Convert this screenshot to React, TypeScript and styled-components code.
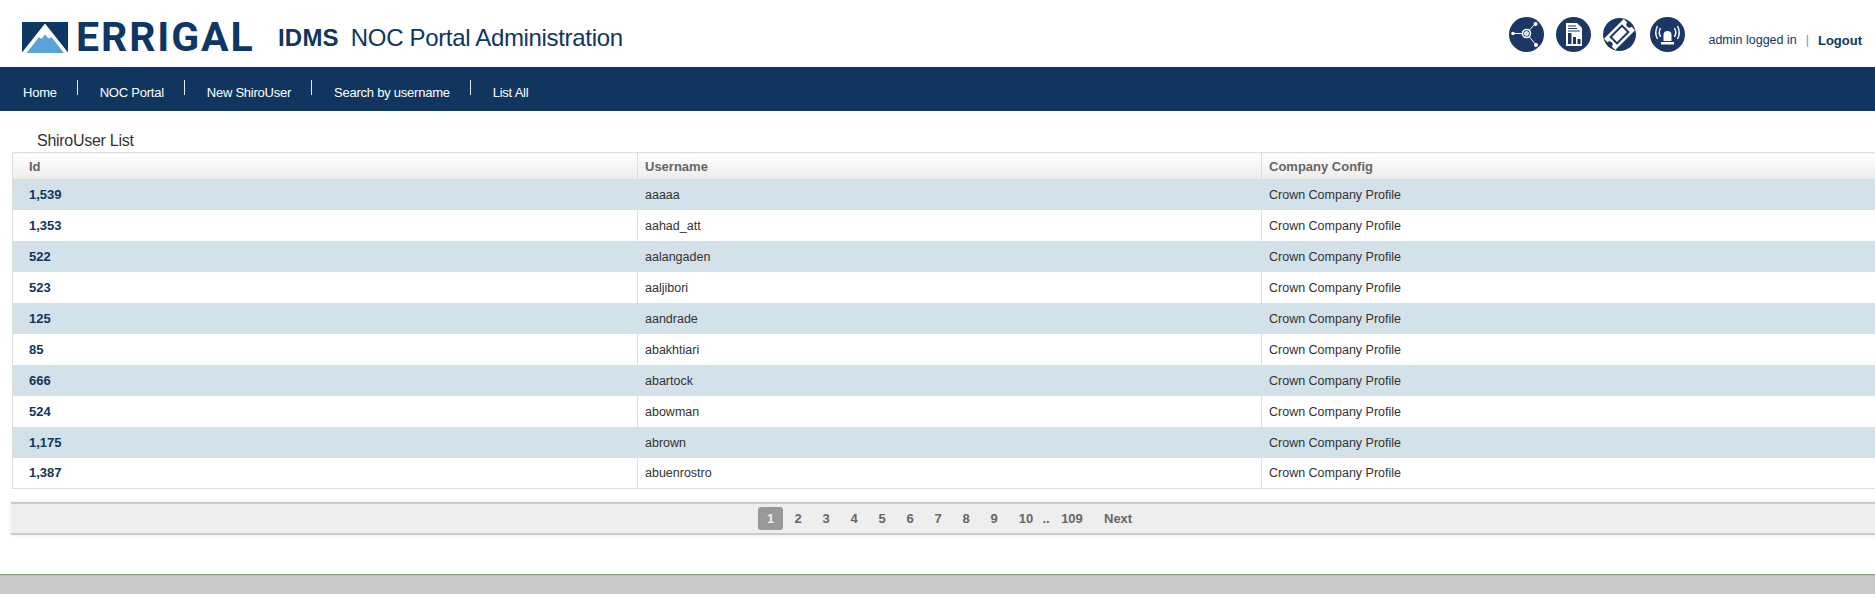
import React from "react";
import styled, { createGlobalStyle } from "styled-components";

const Global = createGlobalStyle`
  html, body { margin: 0; padding: 0; background: #fff; overflow: hidden; }
  body { font-family: "Liberation Sans", Arial, sans-serif; }
  #root { height: 594px; }
`;
const navy = "#10365f";
const Page = styled.div`
  width: 1875px; height: 594px; display: flex; flex-direction: column; overflow: hidden;
`;
const Header = styled.header`
  height: 67px; flex: none; display: flex; align-items: flex-start; padding-left: 22px; box-sizing: border-box;
`;
const Logo = styled.div`
  display: flex; gap: 8px; margin-top: 22px; width: 256px; flex: none; height: 31px;
`;
const LogoWord = styled.span`
  display: block; font: 700 41px/31px Roboto, "Liberation Sans", sans-serif; color: #0f3766;
  letter-spacing: 1.9px; white-space: nowrap;
`;
const Title = styled.h1`
  margin: 23px 0 0; font: 400 24px/30px "Liberation Sans", sans-serif; color: ${navy}; white-space: nowrap; letter-spacing: -.33px;
`;
const TitleStrong = styled.strong`
  font-weight: 700; margin-right: 12px; letter-spacing: .2px;
`;
const Right = styled.div`
  margin-left: auto; display: flex; align-items: flex-start; padding-right: 13px;
`;
const Icons = styled.div`
  display: flex; gap: 12px; margin-top: 17px; margin-right: 23px;
`;
const IconSvg = styled.svg`
  width: 35px; height: 35px; display: block;
`;
const Status = styled.div`
  margin-top: 33px; font-size: 12.5px; line-height: 15px; color: ${navy}; display: flex; white-space: nowrap;
`;
const Sep = styled.span`
  margin: 0 9px; color: #6f9cc4;
`;
const LogoutLink = styled.a`
  font-weight: 700; font-size: 13px; color: ${navy};
`;
const Nav = styled.nav`
  height: 44px; flex: none; background: #10365f; display: flex; align-items: flex-start; padding-left: 23px;
`;
const NavItem = styled.a<{ $divider?: boolean }>`
  position: relative; font-size: 13px; line-height: 15px; margin-top: 18px; color: #fff; white-space: nowrap;
  margin-right: ${(p) => (p.$divider ? "43px" : "0")};
  letter-spacing: -.24px;
  ${(p) => p.$divider && `&::after { content: ""; position: absolute; right: -21px; top: -5px; width: 1px; height: 15px; background: #e6ebf1; }`}
`;
const Heading = styled.div`
  font-size: 16px; line-height: 18px; color: #333; margin: 21px 0 0 37px; height: 20px; flex: none; letter-spacing: -.28px;
`;
const Table = styled.table`
  margin-left: 12px; width: 1875px; table-layout: fixed; border-collapse: collapse; border: 1px solid #dedede; flex: none;
`;
const Th = styled.th`
  height: 26px; padding: 1px 0 0 16px; box-sizing: border-box; text-align: left; font-size: 13px; font-weight: 700; color: #666;
  background: linear-gradient(#fff, #ececec); border-right: 1px solid #dedede;
  &:not(:first-child) { padding-left: 7px; }
`;
const Tr = styled.tr<{ $odd: boolean }>`
  background: ${(p) => (p.$odd ? "#d3e1e8" : "#fff")};
`;
const Td = styled.td`
  height: 31px; padding: 1px 0 0 7px; box-sizing: border-box; font-size: 12.5px; color: #333; border-right: 1px solid #dedede; white-space: nowrap;
`;
const IdCell = styled(Td)`
  padding: 0 0 0 16px; font-size: 13px; font-weight: 700; color: #10365f;
`;
const Pager = styled.div`
  margin: 13px 0 0 11px; height: 33px; width: 1875px; flex: none; box-sizing: border-box; background: #eee;
  border-top: 2px solid #ccc; border-bottom: 2px solid #ccc; box-shadow: 0 0 3px rgba(0,0,0,.12);
`;
const PagerRow = styled.div`
  display: flex; align-items: center; height: 29px; padding-left: 746px; font-size: 13px; font-weight: 700; color: #666;
`;
const PageNum = styled.a<{ $active?: boolean; $wide?: boolean }>`
  width: 28px; text-align: center; line-height: 23px; height: 23px; flex: none;
  ${(p) => p.$wide && `margin-left: 4px;`}
  ${(p) => p.$active && `width: 25px; margin-right: 1px; margin-left: 1px; background: #999; color: #eee; border-radius: 3px;`}
`;
const Gap = styled.span` width: 18px; text-align: center; flex:none; margin-left: -3px; `;
const Last = styled.a` width: 30px; text-align: center; flex:none; margin-left: 2px; `;
const NextLink = styled.a` margin-left: 17px; flex:none; `;
const Footer = styled.div`
  margin-top: auto; height: 19px; flex: none; background: #c9c9c9; border-top: 1px solid #8a9e80; box-shadow: inset 0 1px #b9c2b2;
`;

const bg = "#1b3766";
const NodesIcon = () => (
  <IconSvg viewBox="0 0 35 35">
    <circle cx="17.5" cy="17.5" r="17.5" fill={bg} />
    <g stroke="#fff" strokeWidth="1" fill="none">
      <path d="M4 16.5H13.5M20 13.5L26 7M20.5 20L27 28" />
      <circle cx="17.5" cy="16.5" r="4" strokeWidth="1.6" />
      <circle cx="17.5" cy="16.5" r="2" fill="#cdd6e2" />
    </g>
    <g fill="#fff"><circle cx="4" cy="16.5" r="1.8" /><circle cx="26.5" cy="7" r="2" /><circle cx="27" cy="28" r="2" /></g>
  </IconSvg>
);
const ReportIcon = () => (
  <IconSvg viewBox="0 0 35 35">
    <circle cx="17.5" cy="17.5" r="17.5" fill={bg} />
    <path d="M10 6H21L26 11V29H10Z" fill="#fff" />
    <path d="M12 9H20M12 11.5H21M12 14H24" stroke={bg} strokeWidth="1" />
    <path d="M12 16H15.5V27H12ZM17 20H20V27H17ZM21.5 22H24.5V27H21.5Z" fill={bg} />
  </IconSvg>
);
const TicketIcon = () => (
  <IconSvg viewBox="0 0 35 35">
    <circle cx="16.5" cy="17.5" r="16.5" fill={bg} />
    <g transform="rotate(-45 16.5 17.5)">
      <path d="M2.5 9.5H30.5V14.5A3 3 0 0 0 30.5 20.5V25.5H2.5V20.5A3 3 0 0 0 2.5 14.5Z" fill="#fff" />
      <rect x="8.5" y="13" width="16" height="9" fill="#fff" stroke={bg} strokeWidth="2" />
    </g>
  </IconSvg>
);
const AlarmIcon = () => (
  <IconSvg viewBox="0 0 35 35">
    <circle cx="17.5" cy="17.5" r="17.5" fill={bg} />
    <path d="M13.5 24V18A4 4 0 0 1 21.5 18V24Z" fill="#fff" />
    <path d="M11 25H24V27.5H11Z" fill="#fff" />
    <g stroke="#fff" strokeWidth="1.4" fill="none">
      <path d="M10.5 11Q8 15.5 10.5 20M7.5 9Q4 15.5 7.5 22M24.5 11Q27 15.5 24.5 20M27.5 9Q31 15.5 27.5 22" />
    </g>
  </IconSvg>
);
const MountainLogo = () => (
  <svg width="46" height="31" viewBox="0 0 46 31" style={{ flex: "none", display: "block" }}>
    <rect width="46" height="31" fill="#0f3766" />
    <path d="M0 30.5L23 1.5L46 30.5V31H0Z" fill="#fff" />
    <path d="M4.5 31L17 15L19.5 17L23 12.5L26.5 16.5L29.5 15L42 31Z" fill="#5ba3d6" />
  </svg>
);

const rows: [string, string][] = [
  ["1,539", "aaaaa"], ["1,353", "aahad_att"], ["522", "aalangaden"], ["523", "aaljibori"], ["125", "aandrade"],
  ["85", "abakhtiari"], ["666", "abartock"], ["524", "abowman"], ["1,175", "abrown"], ["1,387", "abuenrostro"],
];

export default function App() {
  return (
    <Page>
      <Global />
      <Header>
        <Logo><MountainLogo /><LogoWord>ERRIGAL</LogoWord></Logo>
        <Title><TitleStrong>IDMS</TitleStrong>NOC Portal Administration</Title>
        <Right>
          <Icons><NodesIcon /><ReportIcon /><TicketIcon /><AlarmIcon /></Icons>
          <Status>admin logged in<Sep>|</Sep><LogoutLink>Logout</LogoutLink></Status>
        </Right>
      </Header>
      <Nav>
        <NavItem $divider>Home</NavItem>
        <NavItem $divider>NOC Portal</NavItem>
        <NavItem $divider>New ShiroUser</NavItem>
        <NavItem $divider>Search by username</NavItem>
        <NavItem>List All</NavItem>
      </Nav>
      <Heading>ShiroUser List</Heading>
      <Table>
        <colgroup><col style={{ width: 625 }} /><col style={{ width: 624 }} /><col /></colgroup>
        <thead><tr><Th>Id</Th><Th>Username</Th><Th>Company Config</Th></tr></thead>
        <tbody>
          {rows.map(([id, name], i) => (
            <Tr key={id} $odd={i % 2 === 0}>
              <IdCell>{id}</IdCell><Td>{name}</Td><Td>Crown Company Profile</Td>
            </Tr>
          ))}
        </tbody>
      </Table>
      <Pager>
        <PagerRow>
          <PageNum $active>1</PageNum>
          {["2","3","4","5","6","7","8","9"].map((n) => <PageNum key={n}>{n}</PageNum>)}
          <PageNum $wide>10</PageNum>
          <Gap>..</Gap>
          <Last>109</Last>
          <NextLink>Next</NextLink>
        </PagerRow>
      </Pager>
      <Footer />
    </Page>
  );
}
